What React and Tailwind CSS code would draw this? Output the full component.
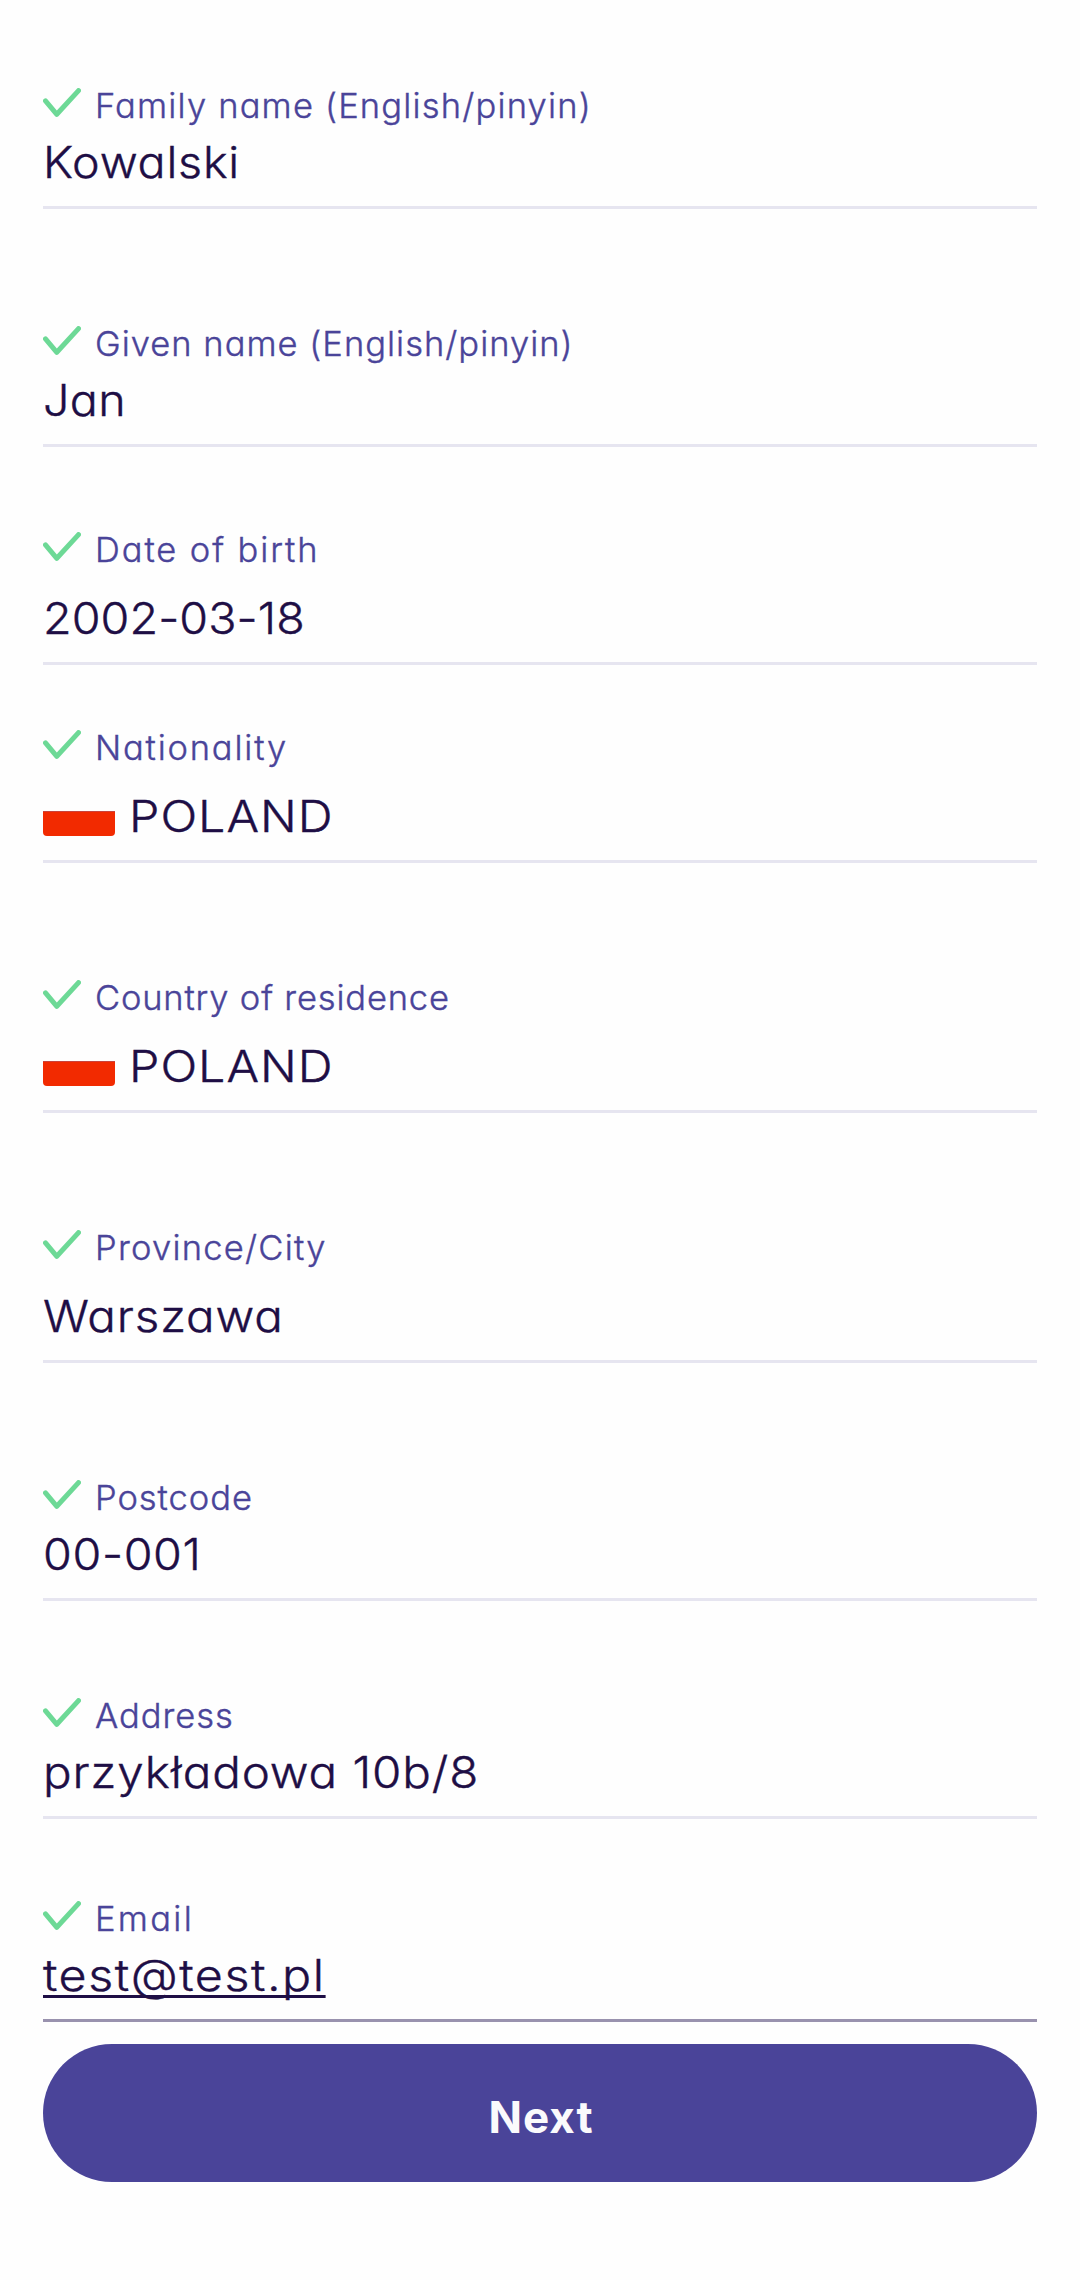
const FIELDS = [
  { label: "Family name (English/pinyin)", value: "Kowalski", gap: "mt-[88px]", ls: "tracking-[1.18px]", vls: "scale-x-[1.06] tracking-[0.72px]" },
  { label: "Given name (English/pinyin)", value: "Jan", gap: "mt-[117px]", ls: "tracking-[1.02px]", vls: "scale-x-[1.06] tracking-[0.3px]" },
  { label: "Date of birth", value: "2002-03-18", gap: "mt-[85px]", ls: "tracking-[1.9px]", vls: "scale-x-[1.06] tracking-[0.07px]", tall: true },
  { label: "Nationality", value: "POLAND", gap: "mt-[65px]", ls: "tracking-[1.8px]", vls: "scale-x-[1.1] tracking-[0.9px]", tall: true, flag: true },
  { label: "Country of residence", value: "POLAND", gap: "mt-[117px]", ls: "tracking-[0.82px]", vls: "scale-x-[1.1] tracking-[0.9px]", tall: true, flag: true },
  { label: "Province/City", value: "Warszawa", gap: "mt-[117px]", ls: "tracking-[1.25px]", vls: "scale-x-[1.08] tracking-[0.8px]", tall: true },
  { label: "Postcode", value: "00-001", gap: "mt-[117px]", ls: "tracking-[0.96px]", vls: "scale-x-[1.06] tracking-[0.6px]" },
  { label: "Address", value: "przykładowa 10b/8", gap: "mt-[97px]", ls: "tracking-[0.96px]", vls: "scale-x-[1.08] tracking-[0.83px]" },
  { label: "Email", value: "test@test.pl", gap: "mt-[82px]", ls: "tracking-[2.3px]", vls: "scale-x-[1.1] tracking-[1.4px]", active: true },
];

function Check() {
  return (
    <svg className="h-[30px] w-[38px] shrink-0" viewBox="0 0 38 30" fill="none" stroke="#6dd996" strokeWidth="5" strokeLinecap="round" strokeLinejoin="round">
      <path d="M2.5 12.8 13.8 26.3 35.5 2.6" />
    </svg>
  );
}

function PolishFlag() {
  return (
    <span className="mr-[14px] flex h-[50px] w-[72px] shrink-0 flex-col">
      <span className="mt-[20px] h-[25px] rounded-b-[4px] border-t border-[#c9443c] bg-[#f22a00]" />
    </span>
  );
}

function Field({ label, value, gap, ls, vls, tall, flag, active }) {
  return (
    <div className={`${gap} border-b-[3px] ${active ? "border-[#9992ae]" : "border-[#e6e5f0]"}`}>
      <div className="flex h-[35px] gap-[14px]">
        <Check />
        <span className={`whitespace-nowrap text-[34.5px] leading-[35px] text-[#4a4499] [-webkit-text-stroke:0.4px_#4a4499] ${ls}`}>{label}</span>
      </div>
      <div className={`flex items-center pb-[14px] ${tall ? "mt-[21px]" : "mt-[9px]"}`}>
        {flag && <PolishFlag />}
        <span
          className={`origin-left whitespace-nowrap text-[44px] leading-[60px] text-[#1e0e45] [-webkit-text-stroke:0.4px_#1e0e45] ${vls} ${
            active ? "underline decoration-[3px] underline-offset-[4px] [text-decoration-skip-ink:none]" : ""
          }`}
        >
          {value}
        </span>
      </div>
    </div>
  );
}

export default function App() {
  return (
    <main className="flex h-[2280px] w-[1080px] flex-col overflow-hidden bg-[#fefefe] px-[43px] font-['Inter',sans-serif] font-light [font-feature-settings:'cv11']">
      {FIELDS.map((f) => (
        <Field key={f.label} {...f} />
      ))}
      <button className="mt-[22px] flex h-[138px] w-full shrink-0 items-center justify-center rounded-full bg-[#4a4499] pt-2 pl-0.5 text-[44px] font-bold leading-[60px] tracking-[1px] text-[#fafafc]">
        Next
      </button>
    </main>
  );
}
